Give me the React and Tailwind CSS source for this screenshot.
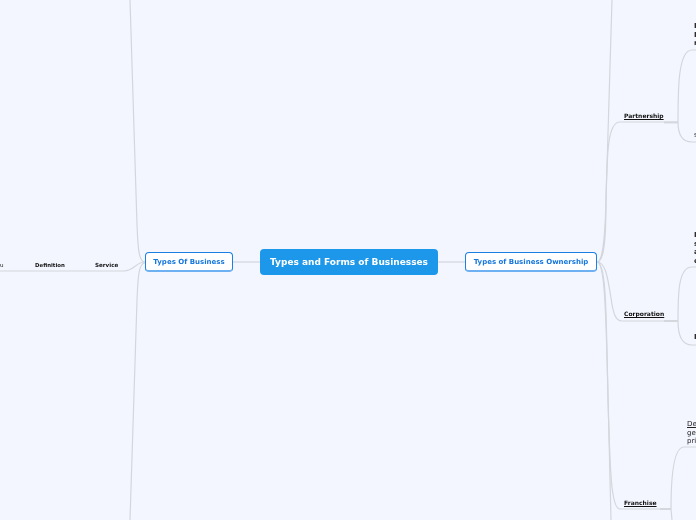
import React from 'react';

const font = "font-['DejaVu_Sans',sans-serif]";

const Lines = () => (
  <svg className="absolute inset-0" width="696" height="520" fill="none" stroke="#d3d6dc" strokeWidth="1.2">
    {/* left side */}
    <path d="M145 262 C139 262 138 250 137 225 L130 0" />
    <path d="M145 263 C139 263 138 275 137 300 L130 520" />
    <path d="M145 262 C136 262 134 271 124 271 L0 271" />
    {/* center links */}
    <path d="M233 262 L260 262" />
    <path d="M438 262 L465 262" />
    {/* right side trunk */}
    <path d="M597 262 C604 262 606 240 606 200 L612 0" />
    <path d="M597 262 C603 262 605 240 606 200 C607 150 608 122 620 122 L678 122" />
    <path d="M597 262 C606 262 608 280 611 298 C613 312 615 321 622 321 L678 321" />
    <path d="M597 262 C605 262 606 300 607 353 L611 520" />
    <path d="M597 262 C604 262 606 300 608 400 C610 470 611 509 620 509 L671 509" />
    {/* right branches */}
    <path d="M678 122 C678 90 678 50 692 50 L696 50" />
    <path d="M678 122 C678 130 680 142 692 142 L696 142" />
    <path d="M678 321 C678 295 678 267 692 267 L696 267" />
    <path d="M678 321 C678 332 680 345 692 345 L696 345" />
    <path d="M671 509 C671 485 672 447 684 447 L696 447" />
    <path d="M671 509 L672 520" />
    {/* thicker stubs where a branch leaves its label */}
    <path d="M664 122.5 L678 122.5" strokeWidth="1.8" />
    <path d="M664 321 L678 321" strokeWidth="1.8" />
    <path d="M660 509 L671 509" strokeWidth="1.8" />
  </svg>
);

const Label = ({ className, children }) => (
  <div className={`absolute font-bold leading-[9px] whitespace-nowrap text-[#111] ${className}`}>
    {children}
  </div>
);

const Node = ({ className, children }) => (
  <div className={`absolute flex items-center justify-center bg-white border border-[#1b7fe3] border-b-2 border-b-[#6eb1f2] rounded-[4px] pt-[1px] text-[7px] font-bold text-[#1576dc] whitespace-nowrap ${className}`}>
    {children}
  </div>
);

const Clip = ({ className, children }) => (
  <div className={`absolute text-[7px] leading-[8.7px] text-[#222] whitespace-pre ${className}`}>
    {children}
  </div>
);

export default function App() {
  return (
    <div className={`relative w-[696px] h-[520px] overflow-hidden bg-[#f3f6ff] ${font}`}>
      <Lines />

      {/* own layer: the map's text is grey-smoothed */}
      <div className="absolute inset-0 will-change-transform">
        {/* central topic */}
        <div className="absolute left-[260px] top-[249px] w-[178px] h-[26px] flex items-center justify-center bg-[#1c97ea] rounded-[4px] pt-[1px] text-[9px] font-bold text-white whitespace-nowrap">
          Types and Forms of Businesses
        </div>

        <Node className="left-[145px] top-[252px] w-[88px] h-[20px]">Types Of Business</Node>
        <Node className="left-[465px] top-[252px] w-[132px] h-[20px]">Types of Business Ownership</Node>

        {/* left branch */}
        <Label className="left-[95px] top-[261px] text-[5.6px]">Service</Label>
        <Label className="left-[35px] top-[261px] text-[5.4px]">Definition</Label>
        <Label className="left-0 top-[261px] text-[5.6px] font-normal">u</Label>

        {/* right branch */}
        <Label className="left-[624px] top-[111px] text-[6px] underline">Partnership</Label>
        <Label className="left-[624px] top-[309px] text-[6px] underline">Corporation</Label>
        <Label className="left-[624px] top-[498px] text-[6px] underline">Franchise</Label>

        <Clip className="left-[694px] top-[22px] font-bold">{'I\nI\nr'}</Clip>
        <Clip className="left-[694px] top-[131px]">s</Clip>
        <Clip className="left-[694px] top-[231px] font-bold">{'I\ns\na\ne'}</Clip>
        <Clip className="left-[694px] top-[333px] font-bold">I</Clip>
        <Clip className="left-[687px] top-[420px]">
          <span className="underline">De</span>{'\nge\npri'}
        </Clip>
      </div>
    </div>
  );
}
